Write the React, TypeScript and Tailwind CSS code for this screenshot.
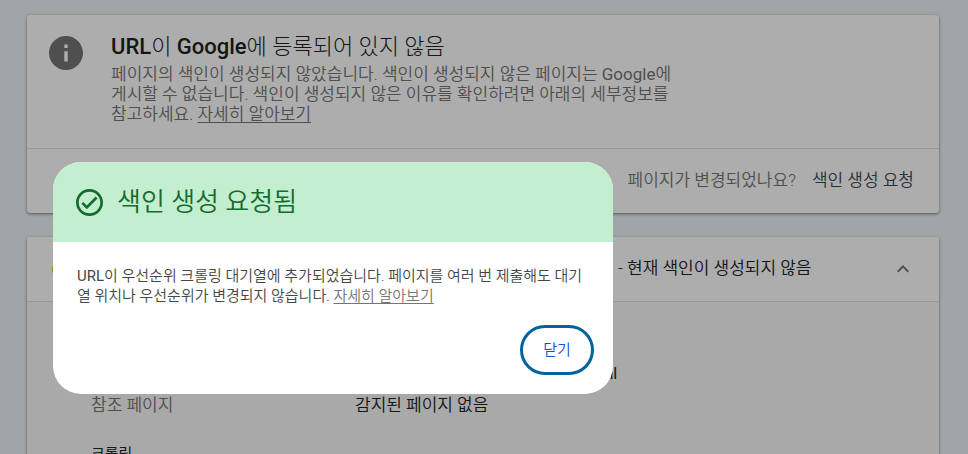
import type { ReactNode } from "react";

interface DetailRowProps {
  label: string;
  children: ReactNode;
}

function InfoIcon() {
  return (
    <svg viewBox="2 2 20 20" className="size-[34px] shrink-0 mt-[21px]" fill="#757575" aria-hidden="true">
      <path d="M12 2C6.48 2 2 6.48 2 12s4.48 10 10 10 10-4.48 10-10S17.52 2 12 2zm1 15h-2v-6h2v6zm0-8h-2V7h2v2z" />
    </svg>
  );
}

function CheckCircleIcon() {
  return (
    <svg viewBox="2 2 20 20" className="size-[27px] shrink-0" fill="#146c2e" aria-hidden="true">
      <path d="M12 2C6.48 2 2 6.48 2 12s4.48 10 10 10 10-4.48 10-10S17.52 2 12 2zm0 18c-4.41 0-8-3.59-8-8s3.59-8 8-8 8 3.59 8 8-3.59 8-8 8zm4.59-12.42L10 14.17l-2.59-2.58L6 13l4 4 8-8-1.41-1.42z" />
    </svg>
  );
}

function DetailRow({ label, children }: DetailRowProps) {
  return (
    <div className="flex h-8 items-center">
      <dt className="w-[264px] shrink-0 text-[#757575]">{label}</dt>
      <dd className="text-[#202124]">{children}</dd>
    </div>
  );
}

function StatusCard() {
  return (
    <section className="rounded-[3px] bg-white shadow-[0_1px_3px_rgba(0,0,0,0.5)]">
      <div className="flex h-[133px] gap-7 pl-[22px] pr-6">
        <InfoIcon />
        <div className="max-w-[576px] pt-4">
          <h1 className="text-[22px] leading-8 font-light text-[#202124]">
            <span className="font-medium">URL</span>이 <span className="font-medium">Google</span>에
            등록되어 있지 않음
          </h1>
          <p className="pt-px text-[17px] leading-5 font-[350] text-[#757575]">
            페이지의 색인이 생성되지 않았습니다. 색인이 생성되지 않은 페이지는{" "}
            <span className="font-normal">Google</span>에 게시할 수 없습니다. 색인이 생성되지 않은
            이유를 확인하려면 아래의 세부정보를 참고하세요.{" "}
            <a href="#learn-more" className="underline underline-offset-2">
              자세히 알아보기
            </a>
          </p>
        </div>
      </div>
      <div className="flex h-[65px] items-center justify-end gap-4 border-t border-[#e0e0e0] pr-[25px] text-[17px] font-[350]">
        <span className="text-[#757575]">페이지가 변경되었나요?</span>
        <button type="button" className="text-[#3c4a55]">
          색인 생성 요청
        </button>
      </div>
    </section>
  );
}

function IndexingCard() {
  return (
    <section className="h-[400px] rounded-[3px] bg-[#fafafa] shadow-[0_1px_3px_rgba(0,0,0,0.5)]">
      <div className="flex h-[65px] items-center justify-between rounded-t-[3px] border-b border-[#e0e0e0] bg-white pl-[25px] pr-6">
        <div className="flex items-center">
          <span className="size-5 rounded-full bg-[#f9ab00]" />
          <h2 className="pl-[546px] text-[17px] font-[350] text-[#202124]">
            - 현재 색인이 생성되지 않음
          </h2>
        </div>
        <button type="button" aria-label="접기">
          <svg viewBox="0 0 24 24" className="size-6" fill="#757575" aria-hidden="true">
            <path d="M12 8l-6 6 1.41 1.41L12 10.83l4.59 4.58L18 14z" />
          </svg>
        </button>
      </div>
      <dl className="px-16 pt-14 text-[17px] font-[350]">
        <DetailRow label="사이트맵">
          <span className="text-base font-normal">https://example.com/sitemap_kr.xml</span>
        </DetailRow>
        <DetailRow label="참조 페이지">감지된 페이지 없음</DetailRow>
      </dl>
      <h3 className="px-16 pt-[22px] text-[15px] leading-5 text-[#202124]">크롤링</h3>
    </section>
  );
}

function RequestDialog() {
  return (
    <div
      role="dialog"
      aria-labelledby="dialog-title"
      className="absolute left-[53px] top-[162px] w-[560px] overflow-hidden rounded-[28px] bg-white"
    >
      <header className="flex h-20 items-center gap-[14px] bg-[#c4eed0] px-[23px]">
        <CheckCircleIcon />
        <h2 id="dialog-title" className="text-[26px] leading-8 font-[350] text-[#146c2e]">
          색인 생성 요청됨
        </h2>
      </header>
      <p className="px-6 pt-6 text-[15px] leading-5 font-[350] break-all text-[#444746]">
        <span className="font-normal">URL</span>이 우선순위 크롤링 대기열에 추가되었습니다. 페이지를
        여러 번 제출해도 대기열 위치나 우선순위가 변경되지 않습니다.{" "}
        <a href="#learn-more" className="text-[#757575] underline underline-offset-2">
          자세히 알아보기
        </a>
      </p>
      <div className="flex justify-end px-[19px] py-[19px]">
        <button
          type="button"
          className="h-[50px] w-[74px] rounded-[25px] border-3 border-[#00639b] text-[15px] font-[350] text-[#0b57d0]"
        >
          닫기
        </button>
      </div>
    </div>
  );
}

export default function App() {
  return (
    <main className="relative h-screen overflow-hidden bg-[#eef3f7] font-['Roboto','Noto_Sans_CJK_KR',sans-serif]">
      <div className="flex flex-col gap-6 pt-[15px] pl-[27px] pr-[29px]">
        <StatusCard />
        <IndexingCard />
      </div>
      <div className="absolute inset-0 bg-black/32" />
      <RequestDialog />
    </main>
  );
}
